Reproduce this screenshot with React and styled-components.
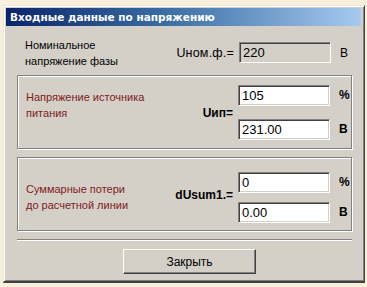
import styled, { createGlobalStyle } from "styled-components"

const Global = createGlobalStyle`
  html, body {
    margin: 0;
    padding: 0;
    background: #f8f0dc;
  }
  body {
    font-family: "Liberation Sans", Arial, sans-serif;
  }
`

const Window = styled.div`
  margin: 5px 0 0 3px;
  width: 362px;
  height: 278px;
  box-sizing: border-box;
  background: #d4d0c8;
  border-top: 1px solid #e8e4dc;
  border-left: 1px solid #e8e4dc;
  border-right: 1px solid #404040;
  border-bottom: 2px solid #404040;
  box-shadow: inset 1px 1px 0 #ffffff, inset -1px -1px 0 #808080;
  padding: 2px 3px 3px 2px;
  display: flex;
  flex-direction: column;
`

const TitleBar = styled.div`
  height: 18px;
  flex-shrink: 0;
  background: linear-gradient(to right, #0a246a 0%, #3a6ea5 45%, #a6caf0 100%);
  color: #fff;
  font-family: "DejaVu Sans", Verdana, sans-serif;
  font-weight: bold;
  font-size: 10.5px;
  display: flex;
  align-items: center;
  padding-left: 4px;
`

const Body = styled.div`
  flex: 1;
  display: flex;
  flex-direction: column;
  padding: 10px 9px 0 11px;
`

const Section = styled.div`
  display: grid;
  grid-template-columns: 1fr auto 92px 21px;
  align-items: center;
  padding: 0 0 0 8px;
  height: ${(p) => p.h}px;
  flex-shrink: 0;
  box-sizing: border-box;
  margin-bottom: ${(p) => p.mb}px;
  ${(p) =>
    p.framed &&
    `
    border: 1px solid #808080;
    box-shadow: inset 1px 1px 0 #fff, 1px 1px 0 #fff;
  `}
`

const Label = styled.div`
  font-size: 11px;
  line-height: 16px;
  color: ${(p) => (p.red ? "#7f1a1a" : "#000")};
  margin-top: ${(p) => p.mt || 0}px;
`

const Symbol = styled.div`
  font-size: ${(p) => (p.bold ? 12 : 12.5)}px;
  font-weight: ${(p) => (p.bold ? "bold" : "normal")};
  letter-spacing: ${(p) => (p.bold ? 0 : 0.2)}px;
  text-align: right;
  padding-right: 5px;
  margin-top: ${(p) => p.mt || 0}px;
`

const Inputs = styled.div`
  display: flex;
  flex-direction: column;
  gap: ${(p) => p.gap}px;
  margin-top: ${(p) => p.mt || 0}px;
`

const Field = styled.div`
  height: 21px;
  box-sizing: border-box;
  background: ${(p) => (p.disabled ? "#d4d0c8" : "#fff")};
  border-top: 1px solid #808080;
  border-left: 1px solid #808080;
  border-right: 1px solid #ffffff;
  border-bottom: 1px solid #ffffff;
  box-shadow: inset 1px 1px 0 #404040, inset -1px -1px 0 #d4d0c8;
  font-size: 13px;
  line-height: 19px;
  padding-left: 3px;
  color: #000;
`

const Units = styled.div`
  display: flex;
  flex-direction: column;
  gap: ${(p) => p.gap}px;
  padding-left: 9px;
  margin-top: ${(p) => p.mt || 0}px;
`

const Unit = styled.div`
  height: 21px;
  line-height: 21px;
  font-size: 12px;
  font-weight: ${(p) => (p.bold ? "bold" : "normal")};
`

const Separator = styled.div`
  flex-shrink: 0;
  border-top: 1px solid #808080;
  border-bottom: 1px solid #fff;
`

const Footer = styled.div`
  display: flex;
  justify-content: center;
  padding: 8px 0 0 10px;
`

const Button = styled.button`
  width: 133px;
  height: 25px;
  background: #d4d0c8;
  border-top: 1px solid #fff;
  border-left: 1px solid #fff;
  border-right: 1px solid #404040;
  border-bottom: 1px solid #404040;
  box-shadow: inset -1px -1px 0 #808080;
  font-family: "Liberation Sans", Arial, sans-serif;
  font-size: 12px;
  color: #000;
  padding: 0;
`

const App = () => {
  return (
    <>
      <Global />
      <Window>
        <TitleBar>Входные данные по напряжению</TitleBar>
        <Body>
          <Section h={34} mb={5}>
            <Label>
              Номинальное
              <br />
              напряжение фазы
            </Label>
            <Symbol>Uном.ф.=</Symbol>
            <Inputs gap={0} mt={-2}>
              <Field disabled>220</Field>
            </Inputs>
            <Units gap={0}>
              <Unit>В</Unit>
            </Units>
          </Section>
          <Section framed h={74} mb={8}>
            <Label red mt={-14}>
              Напряжение источника
              <br />
              питания
            </Label>
            <Symbol bold mt={2}>Uип=</Symbol>
            <Inputs gap={13}>
              <Field>105</Field>
              <Field>231.00</Field>
            </Inputs>
            <Units gap={13}>
              <Unit bold>%</Unit>
              <Unit bold>В</Unit>
            </Units>
          </Section>
          <Section framed h={74} mb={8}>
            <Label red mt={6}>
              Суммарные потери
              <br />
              до расчетной линии
            </Label>
            <Symbol bold mt={2}>dUsum1.=</Symbol>
            <Inputs gap={9} mt={6}>
              <Field>0</Field>
              <Field>0.00</Field>
            </Inputs>
            <Units gap={9} mt={6}>
              <Unit bold>%</Unit>
              <Unit bold>В</Unit>
            </Units>
          </Section>
          <Separator />
          <Footer>
            <Button>Закрыть</Button>
          </Footer>
        </Body>
      </Window>
    </>
  )
}

export default App
